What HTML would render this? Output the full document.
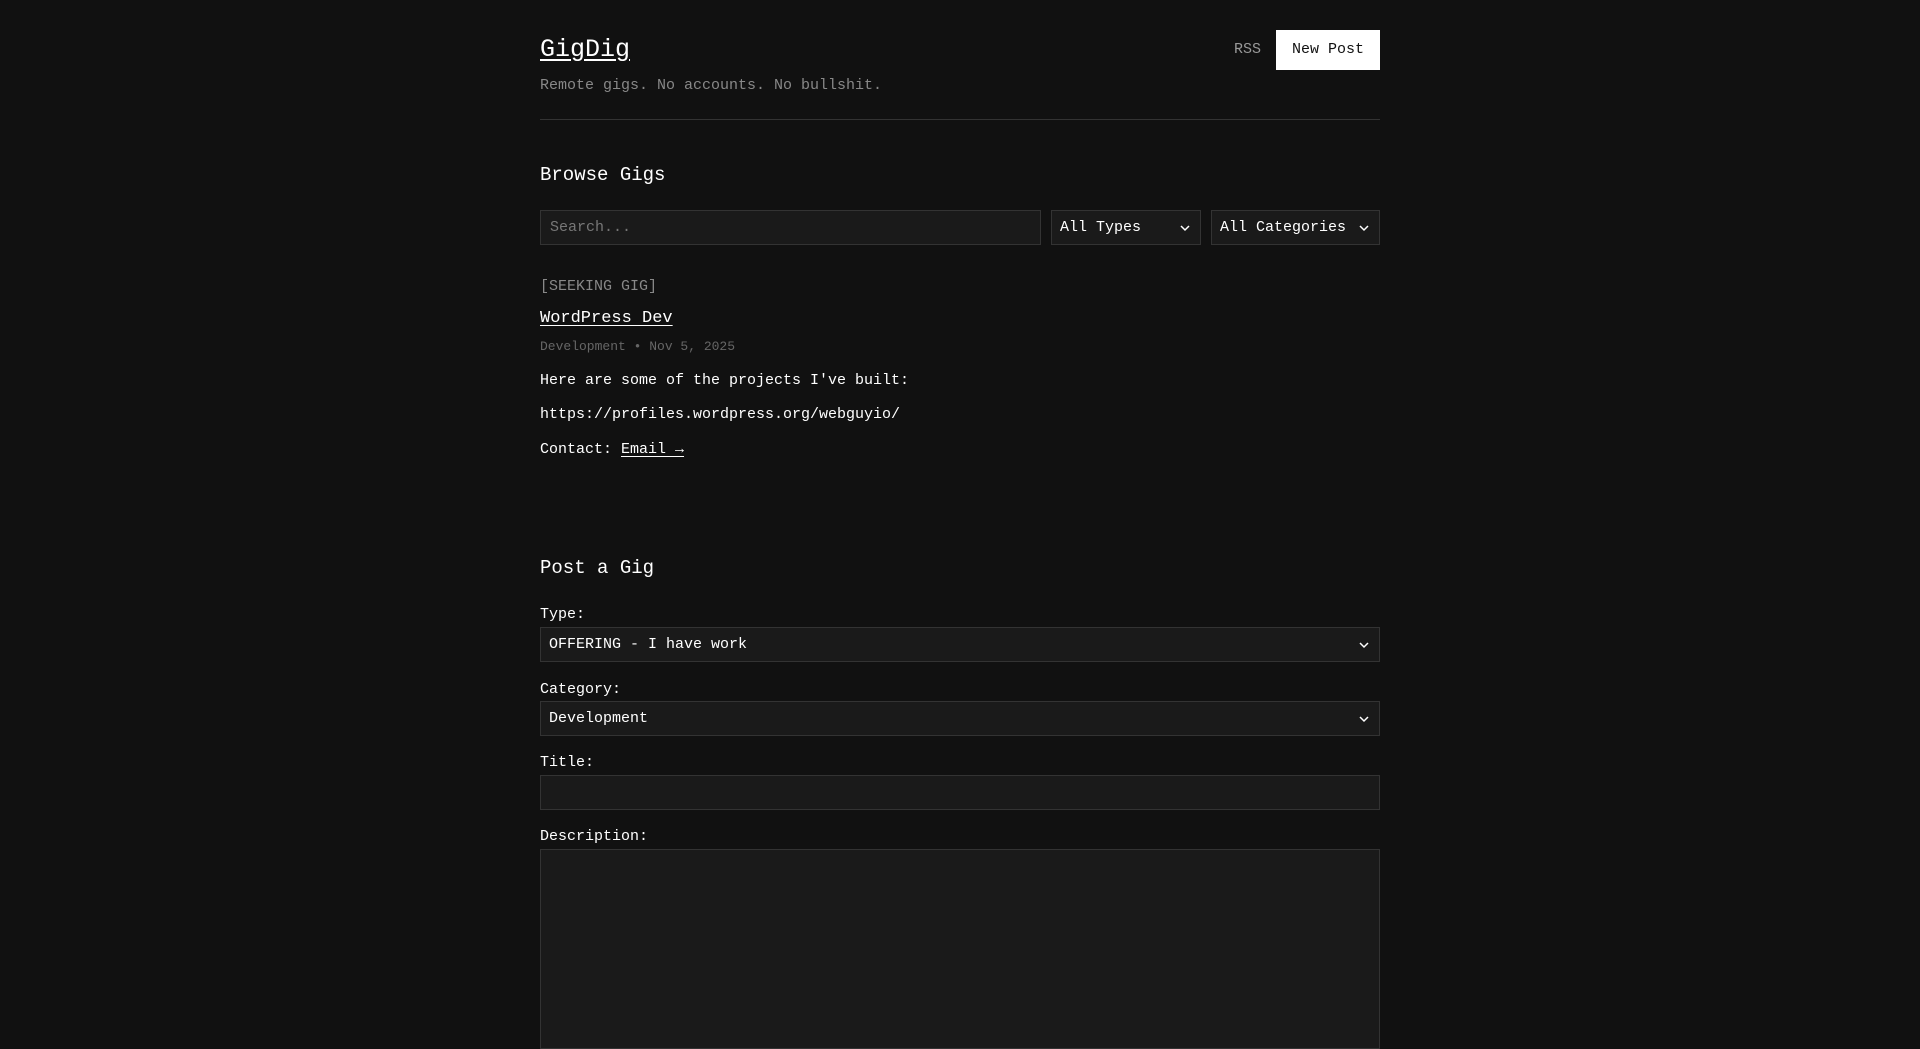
<!DOCTYPE html>
<html><head><meta charset="utf-8"><style>
*{box-sizing:border-box;margin:0;padding:0}
body{background:#111;color:#fff;font-family:"Liberation Mono",monospace;width:1920px;height:993px;overflow:hidden;position:relative}
.a{position:absolute;white-space:nowrap;line-height:1}
.box{position:absolute;background:#1a1a1a;border:1px solid #333}
.chev{position:absolute;top:50%;margin-top:-4px}
</style></head><body>
<div class="a" style="left:540px;top:37px;font-size:25px;text-decoration:underline;text-underline-offset:3px">GigDig</div>
<div class="a" style="left:1234px;top:42px;font-size:15px;color:#999">RSS</div>
<div class="a" style="left:1276px;top:30px;width:104px;height:40px;background:#fff;color:#111;font-size:15px;line-height:40px;text-align:center">New Post</div>
<div class="a" style="left:540px;top:78px;font-size:15px;color:#888">Remote gigs. No accounts. No bullshit.</div>
<div style="position:absolute;left:540px;top:119px;width:840px;height:1px;background:#333"></div>
<div class="a" style="left:540px;top:166px;font-size:19px">Browse Gigs</div>
<div class="box" style="left:540px;top:210px;width:501px;height:35px"><span class="a" style="left:9px;top:9px;font-size:15px;color:#777">Search...</span></div>
<div class="box" style="left:1051px;top:210px;width:150px;height:35px"><span class="a" style="left:8px;top:9px;font-size:15px">All Types</span><svg class="chev" style="right:10px" width="10" height="8" viewBox="0 0 10 8"><path d="M1 2l4 4 4-4" stroke="#fff" stroke-width="1.5" fill="none"/></svg></div>
<div class="box" style="left:1211px;top:210px;width:169px;height:35px"><span class="a" style="left:8px;top:9px;font-size:15px">All Categories</span><svg class="chev" style="right:10px" width="10" height="8" viewBox="0 0 10 8"><path d="M1 2l4 4 4-4" stroke="#fff" stroke-width="1.5" fill="none"/></svg></div>
<div class="a" style="left:540px;top:279px;font-size:15px;color:#888">[SEEKING GIG]</div>
<div class="a" style="left:540px;top:310px;font-size:17px;text-decoration:underline;text-underline-offset:3px">WordPress Dev</div>
<div class="a" style="left:540px;top:340px;font-size:13px;color:#666">Development • Nov 5, 2025</div>
<div class="a" style="left:540px;top:373px;font-size:15px">Here are some of the projects I've built:</div>
<div class="a" style="left:540px;top:407px;font-size:15px">https://profiles.wordpress.org/webguyio/</div>
<div class="a" style="left:540px;top:442px;font-size:15px">Contact: <span style="text-decoration:underline;text-underline-offset:3px">Email →</span></div>
<div class="a" style="left:540px;top:559px;font-size:19px">Post a Gig</div>
<div class="a" style="left:540px;top:607px;font-size:15px">Type:</div>
<div class="box" style="left:540px;top:627px;width:840px;height:35px"><span class="a" style="left:8px;top:9px;font-size:15px">OFFERING - I have work</span><svg class="chev" style="right:10px" width="10" height="8" viewBox="0 0 10 8"><path d="M1 2l4 4 4-4" stroke="#fff" stroke-width="1.5" fill="none"/></svg></div>
<div class="a" style="left:540px;top:682px;font-size:15px">Category:</div>
<div class="box" style="left:540px;top:701px;width:840px;height:35px"><span class="a" style="left:8px;top:9px;font-size:15px">Development</span><svg class="chev" style="right:10px" width="10" height="8" viewBox="0 0 10 8"><path d="M1 2l4 4 4-4" stroke="#fff" stroke-width="1.5" fill="none"/></svg></div>
<div class="a" style="left:540px;top:755px;font-size:15px">Title:</div>
<div class="box" style="left:540px;top:775px;width:840px;height:35px"></div>
<div class="a" style="left:540px;top:829px;font-size:15px">Description:</div>
<div class="box" style="left:540px;top:849px;width:840px;height:200px"></div>
</body></html>
